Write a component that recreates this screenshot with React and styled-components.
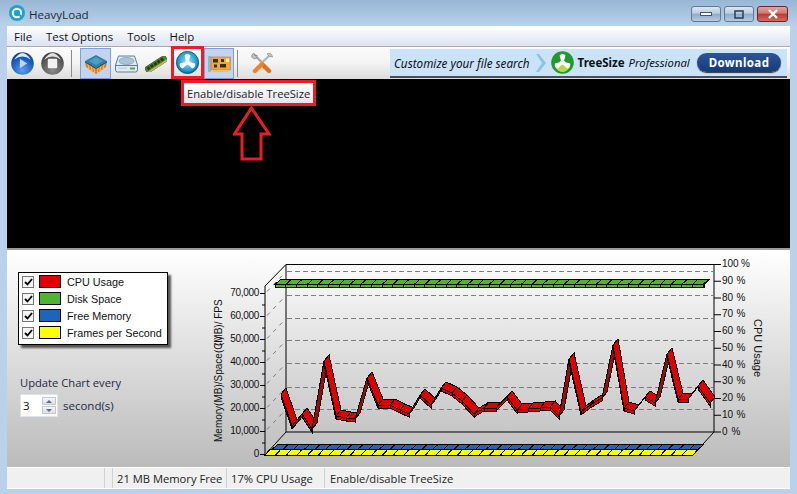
import React from "react";
import styled, { createGlobalStyle } from "styled-components";

const Global = createGlobalStyle`
  html, body { margin: 0; padding: 0; background: #b9d1ea; }
  #root { width: 797px; height: 494px; overflow: hidden; }
`;

const UI = `"Open Sans", "Liberation Sans", sans-serif`;
const RED = "#ed1c24";

const Window = styled.div`
  width: 797px; height: 494px; display: flex; flex-direction: column;
  background: linear-gradient(#99b6d5 0, #b9d1ea 26px);
  font-family: ${UI}; font-size: 11.2px; color: #111;
`;
const TitleBar = styled.div`
  height: 26px; display: flex; align-items: center; padding: 0 9px; gap: 4px; box-sizing: border-box;
`;
const TitleText = styled.span` font-size: 11.6px; color: #1c2a38; flex: 1; padding-top: 3px;`;
const Controls = styled.div` display: flex; gap: 3px; margin-top: 2px; `;
const WinBtn = styled.button`
  width: ${p => (p.$close ? 31 : 30)}px; height: 16px; padding: 0; display: flex; align-items: center; justify-content: center;
  border: 1px solid ${p => (p.$close ? "#6e2230" : "#5f7a98")}; border-radius: 3px;
  background: ${p => p.$close
    ? "linear-gradient(#e0a59a 0, #d5776a 45%, #b83b2e 50%, #cf6d5f 100%)"
    : "linear-gradient(#dbe6f2 0, #b9cce0 45%, #8fabc9 50%, #b5cbe1 100%)"};
`;
const Body = styled.div`
  flex: 1; margin: 0 7px; display: flex; flex-direction: column; min-height: 0;
`;
const MenuBar = styled.div`
  height: 20px; display: flex; align-items: center; padding-left: 7px; gap: 14px;
  background: linear-gradient(#fff 0, #f4f6fb 30%, #dde3f2 100%);
  font-size: 11.4px;
  border-bottom: 1px solid #a9abb0;
`;
const MenuItem = styled.span` color: #111; `;
const Toolbar = styled.div`
  height: 32px; display: flex; align-items: center; box-sizing: border-box;
  border-top: 1px solid #fff;
  background: linear-gradient(#fafafa 0, #f4f4f4 45%, #dcdcdc 100%);
`;
const ToolBtn = styled.div`
  width: ${p => p.$w || 31}px; height: 31px; display: flex; align-items: center; justify-content: center; box-sizing: border-box;
  flex: none;
  ${p => p.$on && `background: #c2d4ee; border: 1px solid #7f9fdc;`}
`;
const MarkedBtn = styled(ToolBtn)`
  position: relative; z-index: 2; height: 33px; margin: -2px 0 0 0; border: 3px solid ${RED};
`;
const Sep = styled.div`
  width: 1px; height: 27px; background: #8a8a8a; flex: none; margin: 0 ${p => p.$r || 4}px 0 ${p => p.$l || 4}px;
`;
const Banner = styled.div`
  margin-left: auto; margin-right: 3px; width: 397px; height: 29px; box-sizing: border-box; display: flex; align-items: center;
  background: #cbe3f9; border-bottom: 2px solid #4a4f55; padding: 0 6px 0 4px;
  font-family: "Noto Sans", sans-serif; font-size: 11.5px; color: #111;
`;
const Italic = styled.span` font-style: italic; white-space: nowrap; font-size: ${p => p.$s || 11.5}px; `;
const Strong = styled.span` font-weight: 700; white-space: nowrap; margin: 0 4px 0 4px; `;
const Download = styled.div`
  margin-left: auto; width: 84px; height: 19px; border-radius: 10px; display: flex; align-items: center; justify-content: center;
  background: linear-gradient(#2d5596, #163a78); box-shadow: 0 1px 1px #333;
  color: #fff; font-weight: 700; font-size: 11.5px; letter-spacing: .4px;
`;
const Viewport = styled.div`
  position: relative; height: 169px; background: #000; border-bottom: 2px solid #9a9a9a; flex: none;
`;
const Tooltip = styled.div`
  position: absolute; left: 174px; top: 1px; width: 135px; height: 26px; box-sizing: border-box;
  border: 3px solid ${RED}; display: flex; align-items: center; padding-left: 3px; white-space: nowrap;
  background: linear-gradient(#fff, #e3e4ef); font-size: 11.2px; color: #222;
`;
const ArrowSvg = styled.svg`
  position: absolute; left: 226px; top: 26px;
`;
const Panel = styled.div`
  height: 217px; display: flex; flex: none; background: linear-gradient(#fff 0, #bbb 100%);
`;
const Side = styled.div`
  width: 200px; flex: none; box-sizing: border-box; padding: 22px 0 0 11px;
`;
const Legend = styled.div`
  width: 150px; height: 73px; box-sizing: border-box; background: #fff; border: 1px solid #000;
  box-shadow: 3px 3px 2px #555; padding: 0 0 0 3px;
`;
const LegendRow = styled.div`
  height: 17px; display: flex; align-items: center; font-family: "Liberation Sans", sans-serif; font-size: 10.8px; color: #111;
`;
const Check = styled.span`
  width: 10px; height: 10px; border: 1px solid #777; background: #f4f4f4; flex: none;
  display: flex; align-items: center; justify-content: center; margin-right: 5px;
`;
const Swatch = styled.span`
  width: 20px; height: 11px; border: 1px solid #000; background: ${p => p.$c}; margin-right: 6px; flex: none;
`;
const UpdateLabel = styled.div` margin: 30px 0 0 2px; font-size: 11.2px; line-height: 16px; color: #1d2a44; white-space: nowrap; `;
const SpinRow = styled.div` display: flex; align-items: center; margin: 3px 0 0 2px; gap: 5px; color: #1d2a44; font-size: 11.5px; `;
const Spin = styled.div`
  width: 38px; height: 23px; box-sizing: border-box; background: #fff; border: 1px solid #dfe3ea; display: flex; align-items: center;
  padding-left: 2px; justify-content: space-between; color: #111;
`;
const SpinBtns = styled.div` display: flex; flex-direction: column; gap: 1px; padding-right: 1px;`;
const SpinBtn = styled.div`
  width: 14px; height: 8px; box-sizing: border-box; border: 1px solid #c4c8ce; background: linear-gradient(#f6f6f6, #dcdfe4);
  display: flex; align-items: center; justify-content: center;
  &::after { content: ""; border-left: 3px solid transparent; border-right: 3px solid transparent;
    ${p => (p.$up ? "border-bottom: 3px solid #4d6f96;" : "border-top: 3px solid #4d6f96;")} }
`;
const Chart = styled.svg`
  flex: none; display: block;
  text { font-family: "Liberation Sans", sans-serif; font-size: 10px; fill: #111; }
`;
const StatusBar = styled.div`
  height: 20px; display: flex; background: #f0f0f0; border-top: 1px solid #fff; flex: none;
  border-bottom: 1px solid #fff;
`;
const Cell = styled.div`
  width: ${p => p.$w}px; flex: ${p => (p.$w ? "none" : 1)}; box-sizing: border-box; padding-left: ${p => (p.$w ? 4 : 5)}px; display: flex; align-items: center;
  white-space: nowrap; color: #222;
  ${p => p.$w && "border-right: 1px solid #d2d2d2;"}
`;

const AppIcon = () => (
  <svg width="16" height="16" viewBox="0 0 16 16">
    <circle cx="8" cy="8" r="8" fill="#1aa3cf" />
    <circle cx="8" cy="8" r="4.2" fill="none" stroke="#fff" strokeWidth="2" />
    <path d="M8 8 L13 12" stroke="#1aa3cf" strokeWidth="2" />
  </svg>
);
const Blades = ({ fill = "#fff" }) => (
  <g fill={fill}>
    <circle cx="11" cy="11" r="2.4" />
    {[0, 120, 240].map(a => (
      <path key={a} transform={`rotate(${a} 11 11)`} d="M10 11 L8.2 4.2 Q11 1.6 13.8 4.2 L12 11 Z" />
    ))}
  </g>
);
const TreeIcon = () => (
  <svg width="23" height="23" viewBox="0 0 22 22">
    <defs>
      <radialGradient id="tb" cx=".5" cy=".45" r=".6"><stop offset="0" stopColor="#a8e0f4" /><stop offset=".7" stopColor="#1b9dd0" /><stop offset="1" stopColor="#0a4f80" /></radialGradient>
    </defs>
    <circle cx="11" cy="11" r="10.6" fill="url(#tb)" stroke="#134a6e" strokeWidth=".8" />
    <Blades fill="#f2fafd" />
  </svg>
);
const GreenTree = () => (
  <svg width="23" height="23" viewBox="0 0 22 22" style={{ flex: "none" }}>
    <circle cx="11" cy="11" r="10.8" fill="#1f9a2c" />
    <path d="M4 15.5 Q11 11 18 15.5 Q15 20 11 20 Q7 20 4 15.5Z" fill="#b6d94a" />
    <Blades fill="#fff" />
  </svg>
);
const PlayIcon = () => (
  <svg width="23" height="23" viewBox="0 0 22 22">
    <defs>
      <radialGradient id="pb" cx=".5" cy=".8" r=".8"><stop offset="0" stopColor="#5f9ce8" /><stop offset=".6" stopColor="#1f5fc0" /><stop offset="1" stopColor="#0c3c8c" /></radialGradient>
    </defs>
    <circle cx="11" cy="11" r="10.8" fill="url(#pb)" />
    <path d="M3 7.5 Q11 1 19 7.5 Q15 1 11 1 Q7 1 3 7.5Z" fill="#d9e8fa" />
    <path d="M8.5 6.5 L15.5 11 L8.5 15.5 Z" fill="#b9d4f4" />
  </svg>
);
const StopIcon = () => (
  <svg width="23" height="23" viewBox="0 0 22 22">
    <defs>
      <radialGradient id="sb" cx=".5" cy=".8" r=".8"><stop offset="0" stopColor="#8a8a8a" /><stop offset=".6" stopColor="#5c5c5c" /><stop offset="1" stopColor="#3d3d3d" /></radialGradient>
    </defs>
    <circle cx="11" cy="11" r="10.8" fill="url(#sb)" />
    <path d="M3 7.5 Q11 1 19 7.5 Q15 1 11 1 Q7 1 3 7.5Z" fill="#e0e0e0" />
    <rect x="6.5" y="6.5" width="9" height="9" rx="1.2" fill="#f2f2f2" />
  </svg>
);
const CpuIcon = () => (
  <svg width="22" height="20" viewBox="0 0 22 20">
    <path d="M0 8 L11 14 L22 8 L21 13 L11 20 L1 13 Z" fill="#e87b1e" />
    <path d="M3 10 L4 15 M6 11 L7 17 M9 13 L9.5 19 M13 13 L12.5 19 M16 11 L15 17 M19 10 L18 15" stroke="#ffc35a" strokeWidth="1" />
    <path d="M0 7 L11 1 L22 7 L11 13.5 Z" fill="#2f7fa6" />
    <path d="M4 7 L11 3 L18 7 L11 11 Z" fill="#4f9fc2" />
    <path d="M0 7 L11 13.5 L22 7 L22 8.5 L11 15 L0 8.5 Z" fill="#1d4f70" />
  </svg>
);
const DriveIcon = () => (
  <svg width="23" height="18" viewBox="0 0 23 18">
    <path d="M3.5 1 H19.5 L22.5 10 V15 Q22.5 17 20.5 17 H2.5 Q.5 17 .5 15 V10 Z" fill="#dfeaf3" stroke="#5e7e96" />
    <ellipse cx="11.5" cy="6" rx="7.5" ry="3.5" fill="#a9c3d8" stroke="#7d9cb3" strokeWidth=".7" />
    <path d="M.8 10.5 H22.2" stroke="#5e7e96" />
    <rect x="15" y="12.5" width="5" height="2" fill="#4fae3c" />
    <rect x="3" y="12.5" width="9" height="1.5" fill="#c5d3dd" />
  </svg>
);
const RamIcon = () => (
  <svg width="22" height="16" viewBox="0 0 22 16">
    <g transform="rotate(-33 11 8)">
      <rect x="-1" y="5" width="24" height="6.5" fill="#4f8a2c" stroke="#2d5418" strokeWidth=".7" />
      <rect x="1" y="6" width="3" height="3" fill="#23391a" /><rect x="5" y="6" width="3" height="3" fill="#23391a" />
      <rect x="9" y="6" width="3" height="3" fill="#23391a" /><rect x="13" y="6" width="3" height="3" fill="#23391a" /><rect x="17" y="6" width="3" height="3" fill="#23391a" />
      <rect x="-1" y="10" width="24" height="1.6" fill="#cdb65a" />
    </g>
  </svg>
);
const GpuIcon = () => (
  <svg width="23" height="18" viewBox="0 0 23 18">
    <rect x="0" y="1" width="3" height="16" fill="#8fb8d8" />
    <rect x="3" y="2" width="19.5" height="13" fill="#efa83c" stroke="#c27d1c" strokeWidth=".6" />
    <rect x="5" y="4" width="5" height="3.5" fill="#3c2a14" /><rect x="13" y="4" width="3" height="3" fill="#3c2a14" />
    <rect x="18" y="3.5" width="3" height="3.5" fill="#fff2cc" /><rect x="6" y="9.5" width="3" height="3" fill="#3c2a14" />
    <rect x="12" y="9" width="6" height="3.5" fill="#3c2a14" /><rect x="5" y="15" width="15" height="2" fill="#e8c25a" />
  </svg>
);
const ToolsIcon = () => (
  <svg width="22" height="21" viewBox="0 0 22 21">
    <path d="M3 1.5 L12 10.5" stroke="#a8a8a8" strokeWidth="2.4" />
    <path d="M.8 4.2 Q0 1 3 0 L4 3 L6.2 2.2 Q6.5 5.5 3.5 6 Z" fill="#c4c4c4" stroke="#666" strokeWidth=".5" />
    <path d="M19 2 L10 10.5" stroke="#b5b5b5" strokeWidth="2.4" />
    <path d="M16 1 Q20.5 -1 21.5 4 L18.5 3.2 Z" fill="#cfcfcf" stroke="#666" strokeWidth=".5" />
    <path d="M11.5 11.5 L18 18" stroke="#e66d1a" strokeWidth="4.4" strokeLinecap="round" />
    <path d="M10.5 11.5 L4 18" stroke="#f08227" strokeWidth="4.4" strokeLinecap="round" />
  </svg>
);

const series = [
  [281,394],[292,426],[302,414],[312,429],[324,361],[336,416],[346,418],[355,419],[367,378],[378,405],[390,405],[400,410],[409,414],
  [420,395],[431,405],[441,388],[452,393],[462,401],[474,414],[484,408],[496,408],[507,397],[517,410],[528,409],[540,408],[550,407],
  [559,416],[569,359],[581,412],[590,405],[602,398],[613,345],[624,408],[634,411],[645,397],[655,403],[667,354],[678,399],[688,399],[698,386],[710,403],
];
const DX = 5, DY = -6;
const gridY = [271, 295, 318, 340, 363, 387, 409];
const leftVals = ["70,000","60,000","50,000","40,000","30,000","20,000","10,000","0"];

const Band = ({ x0, x1, yBack, yFront, dx, color, drop = 0, seg = 10.7 }) => {
  const items = [];
  for (let x = x0; x < x1 - 0.1; x += seg) {
    const r = Math.min(x + seg, x1);
    items.push(
      <g key={x}>
        <polygon points={`${x},${yFront} ${r},${yFront} ${r + dx},${yBack} ${x + dx},${yBack}`} fill={color} stroke="#000" />
        {drop > 0 && <polygon points={`${x},${yFront} ${r},${yFront} ${r},${yFront + drop} ${x},${yFront + drop}`} fill={color} stroke="#000" />}
      </g>
    );
  }
  return <g shapeRendering="crispEdges">{items}</g>;
};

const ChartDrawing = () => (
  <Chart width="583" height="217" viewBox="207 250 583 217">
    <g stroke="#000" fill="none">
      <path d="M286 264.5 H714 V432 H286 Z M286 264.5 L265 286 V455 M265 455 L286 432 M693 455 L714 432" />
    </g>
    {gridY.map(y => (
      <g key={y} stroke="#7d7d7d" fill="none">
        <path d={`M287 ${y + 0.5} H713`} strokeDasharray="5 3" />
        <path d={`M267 ${y + 20.5} L286 ${y + 0.5}`} strokeDasharray="4 5" />
      </g>
    ))}
    <Band x0={265} x1={693} yBack={449.5} yFront={455} dx={5} color="#ffff00" />
    <Band x0={272} x1={698} yBack={444} yFront={449.5} dx={6} color="#1b66b8" />
    <Band x0={275} x1={704} yBack={279.5} yFront={284.5} dx={5.5} color="#50b52e" drop={3} />
    <g stroke="#000" strokeWidth="1" shapeRendering="crispEdges">
      {series.slice(0, -1).map((p, i) => {
        const q = series[i + 1];
        const rising = q[1] < p[1] - 12;
        return (
          <g key={i}>
            <polygon points={`${p[0]},${p[1]} ${q[0]},${q[1]} ${q[0] + DX},${q[1] + DY} ${p[0] + DX},${p[1] + DY}`} fill={rising ? "#9c0a0a" : "#e00000"} />
            {!rising && <polygon points={`${p[0]},${p[1]} ${q[0]},${q[1]} ${q[0]},${q[1] + 3} ${p[0]},${p[1] + 3}`} fill="#d80000" />}
          </g>
        );
      })}
    </g>
    {leftVals.map((v, i) => (
      <g key={v}>
        <text x="259" y={296 + i * 23} textAnchor="end" letterSpacing="-.3">{v}</text>
        <path d={`M260 ${293.5 + i * 23} H265`} stroke="#000" />
        {i < 7 && <path d={`M262 ${305 + i * 23} H265`} stroke="#000" />}
      </g>
    ))}
    {[100,90,80,70,60,50,40,30,20,10,0].map((v, i) => (
      <g key={v}>
        <path d={`M714 ${264.5 + i * 16.75} H721`} stroke="#000" />
        <text x="722" y={267 + i * 16.75}>{v}</text>
        <text x={v === 100 ? 741 : v === 0 ? 731.5 : 736.5} y={267 + i * 16.75}>%</text>
      </g>
    ))}
    <text transform="translate(222 442) rotate(-90)">Memory(MB)/Space(C:)</text>
    <text transform="translate(222 346) rotate(-90)">(MB)/ FPS</text>
    <text transform="translate(754 319) rotate(90)" style={{ fontSize: 11 }}>CPU Usage</text>
  </Chart>
);

const rows = [
  ["CPU Usage", "#e00000"],
  ["Disk Space", "#50b52e"],
  ["Free Memory", "#1b66b8"],
  ["Frames per Second", "#ffff00"],
];

export default function App() {
  return (
    <Window>
      <Global />
      <TitleBar>
        <AppIcon />
        <TitleText>HeavyLoad</TitleText>
        <Controls>
          <WinBtn>
            <svg width="12" height="6" viewBox="0 0 12 6"><rect x=".5" y="1.5" width="11" height="3" fill="#fff" stroke="#3f5a78" /></svg>
          </WinBtn>
          <WinBtn>
            <svg width="10" height="9" viewBox="0 0 10 9"><rect x="1" y="1" width="8" height="7" fill="none" stroke="#2f4560" strokeWidth="1.6" /></svg>
          </WinBtn>
          <WinBtn $close>
            <svg width="12" height="10" viewBox="0 0 12 10"><path d="M2 1 L10 9 M10 1 L2 9" stroke="#fff" strokeWidth="2.4" /></svg>
          </WinBtn>
        </Controls>
      </TitleBar>
      <Body>
        <MenuBar>
          <MenuItem>File</MenuItem>
          <MenuItem>Test Options</MenuItem>
          <MenuItem>Tools</MenuItem>
          <MenuItem>Help</MenuItem>
        </MenuBar>
        <Toolbar>
          <ToolBtn $w={30}><PlayIcon /></ToolBtn>
          <ToolBtn $w={31}><StopIcon /></ToolBtn>
          <Sep $l={3} $r={8} />
          <ToolBtn $on $w={31}><CpuIcon /></ToolBtn>
          <ToolBtn $w={30}><DriveIcon /></ToolBtn>
          <ToolBtn $w={30}><RamIcon /></ToolBtn>
          <MarkedBtn $w={33}><TreeIcon /></MarkedBtn>
          <ToolBtn $on $w={30}><GpuIcon /></ToolBtn>
          <Sep $l={3} $r={9} />
          <ToolBtn $w={30}><ToolsIcon /></ToolBtn>
          <Banner>
            <Italic $s={11.7}>Customize your file search</Italic>
            <svg width="12" height="18" viewBox="0 0 12 18" style={{ margin: "0 4px 0 5px" }}><path d="M1 0 H4 L11 9 L4 18 H1 L7 9 Z" fill="#8fc3e2" /></svg>
            <GreenTree />
            <Strong>TreeSize</Strong>
            <Italic $s={11.3}>Professional</Italic>
            <Download>Download</Download>
          </Banner>
        </Toolbar>
        <Viewport>
          <Tooltip>Enable/disable TreeSize</Tooltip>
          <ArrowSvg width="40" height="56" viewBox="0 0 40 56">
            <path d="M18.5 3 L36 29 H28 V54 H9 V29 H1.5 Z" fill="none" stroke={RED} strokeWidth="3" />
          </ArrowSvg>
        </Viewport>
        <Panel>
          <Side>
            <Legend>
              {rows.map(([label, c]) => (
                <LegendRow key={label}>
                  <Check>
                    <svg width="9" height="8" viewBox="0 0 9 8"><path d="M1 4 L3.5 6.5 L8 1" fill="none" stroke="#000" strokeWidth="1.8" /></svg>
                  </Check>
                  <Swatch $c={c} />
                  {label}
                </LegendRow>
              ))}
            </Legend>
            <UpdateLabel>Update Chart every</UpdateLabel>
            <SpinRow>
              <Spin>
                3
                <SpinBtns><SpinBtn $up /><SpinBtn /></SpinBtns>
              </Spin>
              second(s)
            </SpinRow>
          </Side>
          <ChartDrawing />
        </Panel>
        <StatusBar>
          <Cell $w={98} />
          <Cell $w={8} />
          <Cell $w={114}>21 MB Memory Free</Cell>
          <Cell $w={98}>17% CPU Usage</Cell>
          <Cell>Enable/disable TreeSize</Cell>
        </StatusBar>
      </Body>
    </Window>
  );
}
